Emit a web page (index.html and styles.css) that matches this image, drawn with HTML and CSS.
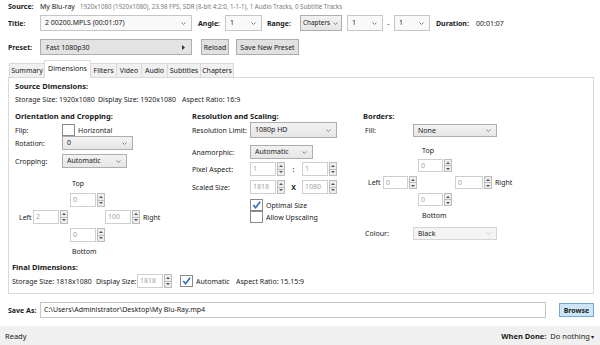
FILE: index.html
```html
<!DOCTYPE html>
<html lang="en">
<head>
    <meta charset="UTF-8">
    <title>HandBrake</title>
    <link rel="stylesheet" href="styles.css">
</head>
<body>

<div class="source-line">
    <b class="lbl">Source:</b><span class="src-name">My Blu-ray</span><span class="src-info">1920x1080 (1920x1080), 23.98 FPS, SDR (8-bit 4:2:0, 1-1-1), 1 Audio Tracks, 0 Subtitle Tracks</span>
</div>

<div class="bar title-bar">
    <b class="lbl">Title:</b>
    <div class="select light w-title">2 00200.MPLS (00:01:07)<svg class="caret" viewBox="0 0 5 3"><polyline points="0.5,0.5 2.5,2.5 4.5,0.5"/></svg></div>
    <b class="lbl-angle">Angle:</b>
    <div class="select light w-angle">1<svg class="caret" viewBox="0 0 5 3"><polyline points="0.5,0.5 2.5,2.5 4.5,0.5"/></svg></div>
    <b class="lbl-range">Range:</b>
    <div class="select w-chap"><span>Chapters</span><svg class="caret" viewBox="0 0 5 3"><polyline points="0.5,0.5 2.5,2.5 4.5,0.5"/></svg></div>
    <div class="select light w-num">1<svg class="caret" viewBox="0 0 5 3"><polyline points="0.5,0.5 2.5,2.5 4.5,0.5"/></svg></div>
    <span class="dash">-</span>
    <div class="select light w-num">1<svg class="caret" viewBox="0 0 5 3"><polyline points="0.5,0.5 2.5,2.5 4.5,0.5"/></svg></div>
    <b class="lbl-dur">Duration:</b>
    <span>00:01:07</span>
</div>

<div class="bar preset-bar">
    <b class="lbl">Preset:</b>
    <div class="preset">Fast 1080p30<svg class="arrow" viewBox="0 0 3 5"><polygon points="0,0 3,2.5 0,5"/></svg></div>
    <button class="btn reload">Reload</button>
    <button class="btn save-preset">Save New Preset</button>
</div>

<div class="tabs">
    <div class="tab w-summary">Summary</div>
    <div class="tab active w-dim">Dimensions</div>
    <div class="tab w-filters">Filters</div>
    <div class="tab w-video">Video</div>
    <div class="tab w-audio">Audio</div>
    <div class="tab w-subs">Subtitles</div>
    <div class="tab w-chapters">Chapters</div>
</div>

<div class="panel">
    <div class="heading">Source Dimensions:</div>
    <div class="info-row">
        <span class="i-storage">Storage Size: 1920x1080</span>
        <span class="i-display">Display Size: 1920x1080</span>
        <span>Aspect Ratio: 16:9</span>
    </div>

    <div class="columns">
        <!-- orientation and cropping -->
        <div class="col">
            <div class="heading">Orientation and Cropping:</div>
            <div class="field flip">
                <span class="flabel">Flip:</span>
                <span class="check"></span>
                <span class="check-text">Horizontal</span>
            </div>
            <div class="field">
                <span class="flabel">Rotation:</span>
                <div class="select sm w-rot">0<svg class="caret" viewBox="0 0 5 3"><polyline points="0.5,0.5 2.5,2.5 4.5,0.5"/></svg></div>
            </div>
            <div class="field crop-mode">
                <span class="flabel">Cropping:</span>
                <div class="select sm w-crop">Automatic<svg class="caret" viewBox="0 0 5 3"><polyline points="0.5,0.5 2.5,2.5 4.5,0.5"/></svg></div>
            </div>

            <div class="cross crop">
                <div class="cross-top-label">Top</div>
                <div class="cross-top"><span class="spin"><span class="spin-val">0</span><span class="spin-btns"><i class="up"></i><i class="dn"></i></span></span></div>
                <div class="cross-mid">
                    <span class="side-l">Left</span>
                    <span class="spin"><span class="spin-val">2</span><span class="spin-btns"><i class="up"></i><i class="dn"></i></span></span>
                    <span class="spin gap-r"><span class="spin-val">100</span><span class="spin-btns"><i class="up"></i><i class="dn"></i></span></span>
                    <span class="side-r">Right</span>
                </div>
                <div class="cross-bottom"><span class="spin"><span class="spin-val">0</span><span class="spin-btns"><i class="up"></i><i class="dn"></i></span></span></div>
                <div class="cross-bottom-label">Bottom</div>
            </div>
        </div>

        <!-- resolution and scaling -->
        <div class="col">
            <div class="heading">Resolution and Scaling:</div>
            <div class="field res-limit">
                <span class="flabel2">Resolution Limit:</span>
                <div class="select tall w-res">1080p HD<svg class="caret" viewBox="0 0 5 3"><polyline points="0.5,0.5 2.5,2.5 4.5,0.5"/></svg></div>
            </div>
            <div class="field anamorphic">
                <span class="flabel2">Anamorphic:</span>
                <div class="select sm w-ana">Automatic<svg class="caret" viewBox="0 0 5 3"><polyline points="0.5,0.5 2.5,2.5 4.5,0.5"/></svg></div>
            </div>
            <div class="field pair">
                <span class="flabel2">Pixel Aspect:</span>
                <span class="spin"><span class="spin-val">1</span><span class="spin-btns"><i class="up"></i><i class="dn"></i></span></span>
                <span class="sep">:</span>
                <span class="spin"><span class="spin-val">1</span><span class="spin-btns"><i class="up"></i><i class="dn"></i></span></span>
            </div>
            <div class="field pair">
                <span class="flabel2">Scaled Size:</span>
                <span class="spin"><span class="spin-val">1818</span><span class="spin-btns"><i class="up"></i><i class="dn"></i></span></span>
                <span class="sep x">X</span>
                <span class="spin"><span class="spin-val">1080</span><span class="spin-btns"><i class="up"></i><i class="dn"></i></span></span>
            </div>
            <div class="field opt optimal">
                <span class="check checked"><svg viewBox="0 0 12 11"><polyline points="2.5,5.5 5,8.5 10,2"/></svg></span>
                <span class="check-text">Optimal Size</span>
            </div>
            <div class="field opt">
                <span class="check"></span>
                <span class="check-text">Allow Upscaling</span>
            </div>
        </div>

        <!-- borders -->
        <div class="col">
            <div class="heading">Borders:</div>
            <div class="field fill">
                <span class="flabel3">Fill:</span>
                <div class="select sm w-fill">None<svg class="caret" viewBox="0 0 5 3"><polyline points="0.5,0.5 2.5,2.5 4.5,0.5"/></svg></div>
            </div>
            <div class="cross borders">
                <div class="cross-top-label">Top</div>
                <div class="cross-top"><span class="spin"><span class="spin-val">0</span><span class="spin-btns"><i class="up"></i><i class="dn"></i></span></span></div>
                <div class="cross-mid">
                    <span class="side-l">Left</span>
                    <span class="spin"><span class="spin-val">0</span><span class="spin-btns"><i class="up"></i><i class="dn"></i></span></span>
                    <span class="spin gap-r"><span class="spin-val">0</span><span class="spin-btns"><i class="up"></i><i class="dn"></i></span></span>
                    <span class="side-r">Right</span>
                </div>
                <div class="cross-bottom"><span class="spin"><span class="spin-val">0</span><span class="spin-btns"><i class="up"></i><i class="dn"></i></span></span></div>
                <div class="cross-bottom-label">Bottom</div>
            </div>
            <div class="field colour">
                <span class="flabel3">Colour:</span>
                <div class="select sm disabled w-fill">Black<svg class="caret" viewBox="0 0 5 3"><polyline points="0.5,0.5 2.5,2.5 4.5,0.5"/></svg></div>
            </div>
        </div>
    </div>

    <div class="final">
        <div class="heading">Final Dimensions:</div>
        <div class="final-row">
            <span class="f-storage">Storage Size: 1818x1080</span>
            <span class="f-display">Display Size:</span>
            <span class="spin"><span class="spin-val">1818</span><span class="spin-btns"><i class="up"></i><i class="dn"></i></span></span>
            <span class="check checked f-check"><svg viewBox="0 0 12 11"><polyline points="2.5,5.5 5,8.5 10,2"/></svg></span>
            <span class="check-text f-auto">Automatic</span>
            <span>Aspect Ratio: 15.15:9</span>
        </div>
    </div>
</div>

<div class="bar save-bar">
    <b class="lbl">Save As:</b>
    <div class="path">C:\Users\Administrator\Desktop\My Blu-Ray.mp4</div>
    <button class="btn browse">Browse</button>
</div>

<div class="status">
    <span class="ready">Ready</span>
    <span class="when-done"><b>When Done:</b> Do nothing<span class="dd">&#9662;</span></span>
</div>

</body>
</html>
```

FILE: styles.css
```css
body {
    margin: 0;
    width: 600px;
    height: 345px;
    overflow: hidden;
    background: #fff;
    font-family: "Noto Sans", "Open Sans", sans-serif;
    font-size: 7px;
    color: #1a1a1a;
}
b {
    font-weight: bold;
}

/* top rows */
.source-line {
    height: 14px;
    line-height: 14px;
    padding-left: 8px;
    display: flex;
    align-items: baseline;
    white-space: nowrap;
}
.src-name {
    margin-right: 5px;
}
.src-info {
    color: #7a7a7a;
    font-size: 6.2px;
}
.bar {
    display: flex;
    align-items: center;
    height: 16px;
    padding-left: 8px;
    white-space: nowrap;
}
.title-bar {
    margin-top: 1px;
}
.preset-bar {
    margin-top: 8px;
}
.lbl {
    width: 32px;
    flex-shrink: 0;
}
.lbl-angle {
    margin-left: 6px;
    width: 27px;
}
.lbl-range {
    margin-left: 5px;
    width: 33px;
}
.lbl-dur {
    margin-left: 6px;
    width: 40px;
}
.dash {
    width: 11px;
    text-align: center;
}

.select {
    box-sizing: border-box;
    height: 16px;
    line-height: 14px;
    padding-left: 4px;
    border: 1px solid #adadad;
    background: linear-gradient(#f2f2f2, #e6e6e6);
    display: flex;
    align-items: center;
    justify-content: space-between;
    padding-right: 5px;
    flex-shrink: 0;
}
.select.light {
    background: #f9f9f9;
    border-color: #c6c6c6;
}
.select.sm {
    height: 14px;
}
.select.disabled {
    background: #f4f4f4;
    border-color: #d5d5d5;
}
.select.disabled .caret {
    stroke: #c4c4c4;
}
.caret {
    width: 5px;
    height: 3px;
    fill: none;
    stroke: #777;
    stroke-width: 0.9;
    flex-shrink: 0;
}
.w-title { width: 152px; }
.w-angle { width: 37px; }
.w-chap {
    width: 42px;
    margin-right: 5px;
    padding: 0 3px 0 2px;
    font-size: 6.4px;
    overflow: hidden;
}
.w-num { width: 36px; }

.preset {
    box-sizing: border-box;
    width: 152px;
    height: 16px;
    border: 1px solid #adadad;
    background: #e3e3e3;
    display: flex;
    align-items: center;
    justify-content: space-between;
    padding: 0 6px 0 5px;
}
.arrow {
    width: 3px;
    height: 5px;
    fill: #333;
}
.btn {
    box-sizing: border-box;
    height: 16px;
    border: 1px solid #adadad;
    background: #e1e1e1;
    font: inherit;
    color: inherit;
    padding: 0;
}
.reload {
    margin-left: 9px;
    width: 28px;
}
.save-preset {
    margin-left: 7px;
    width: 63px;
}

/* tabs */
.tabs {
    display: flex;
    align-items: flex-end;
    height: 17px;
    margin-top: 5px;
    padding-left: 9px;
}
.tab {
    box-sizing: border-box;
    height: 14px;
    line-height: 13px;
    text-align: center;
    border: 1px solid #d9d9d9;
    border-bottom: none;
    background: #f0f0f0;
    margin-left: -1px;
}
.tab:first-child {
    margin-left: 0;
}
.tab.active {
    height: 18px;
    line-height: 16px;
    background: #fff;
    margin-bottom: -1px;
    position: relative;
    z-index: 1;
    padding-bottom: 1px;
}
.w-summary { width: 36px; }
.w-dim { width: 47px; }
.w-filters { width: 27px; }
.w-video { width: 26px; }
.w-audio { width: 27px; }
.w-subs { width: 34px; }
.w-chapters { width: 34px; }

/* panel */
.panel {
    box-sizing: border-box;
    margin-left: 8px;
    width: 586px;
    height: 217px;
    border: 1px solid #d9d9d9;
    padding: 2px 6px 0 6px;
}
.heading {
    font-weight: bold;
    font-size: 7.5px;
    height: 12px;
    line-height: 12px;
    white-space: nowrap;
}
.info-row {
    display: flex;
    height: 12px;
    line-height: 12px;
    margin-top: 2px;
    white-space: nowrap;
}
.i-storage { width: 83px; }
.i-display { width: 84px; }

.columns {
    display: grid;
    grid-template-columns: 177px 171px 1fr;
    margin-top: 4px;
}
.field {
    display: flex;
    align-items: center;
    white-space: nowrap;
}
.flabel { width: 47px; }
.flabel2 { width: 58px; }
.flabel3 { width: 48px; padding-left: 2px; }
.flip {
    height: 12px;
    margin-top: 2px;
}
.crop-mode {
    margin-top: 4px;
}
.w-rot { width: 71px; }
.w-crop { width: 65px; }
.w-res { width: 87px; }
.w-ana { width: 63px; }
.w-fill { width: 84px; }

.check {
    box-sizing: border-box;
    width: 13px;
    height: 12px;
    border: 1px solid #8a8a8a;
    background: #fff;
    display: flex;
    align-items: center;
    justify-content: center;
    flex-shrink: 0;
}
.check svg {
    width: 11px;
    height: 10px;
    fill: none;
    stroke: #2f6bc2;
    stroke-width: 1.8;
}
.check-text {
    margin-left: 3px;
}

/* spinner box */
.spin {
    display: flex;
    height: 14px;
    width: 35px;
    flex-shrink: 0;
}
.spin-val {
    box-sizing: border-box;
    flex: 1;
    border: 1px solid #cfcfcf;
    background: #fff;
    color: #a3a3a3;
    padding-left: 2px;
    line-height: 12px;
}
.spin-btns {
    box-sizing: border-box;
    width: 8px;
    margin-left: 1px;
    display: flex;
    flex-direction: column;
    border: 1px solid #bdbdbd;
    background: #ededed;
}
.spin-btns i {
    flex: 1;
    display: flex;
    align-items: center;
    justify-content: center;
}
.spin-btns i.up {
    border-bottom: 1px solid #bdbdbd;
}
.spin-btns i.up::after {
    content: "";
    border-left: 2px solid transparent;
    border-right: 2px solid transparent;
    border-bottom: 2px solid #555;
}
.spin-btns i.dn::after {
    content: "";
    border-left: 2px solid transparent;
    border-right: 2px solid transparent;
    border-top: 2px solid #555;
}

/* crop / border crosses */
.cross-top-label,
.cross-bottom-label {
    height: 12px;
    line-height: 12px;
}
.cross-mid {
    display: flex;
    align-items: center;
}
.side-l { width: 14px; }
.side-r { margin-left: 3px; }

.crop .cross-top-label { margin: 10px 0 0 57px; }
.crop .cross-top { margin: 3px 0 0 55px; }
.crop .cross-mid { margin: 3px 0 0 4px; }
.crop .gap-r { margin-left: 37px; }
.crop .cross-bottom { margin: 4px 0 0 55px; }
.crop .cross-bottom-label { margin: 4px 0 0 57px; }

.borders .spin { height: 13px; width: 34px; }
.borders .spin-val { line-height: 11px; }
.borders .cross-top-label { margin: 8px 0 0 59px; }
.borders .cross-top { margin: 2px 0 0 55px; }
.borders .cross-mid { margin: 4px 0 0 5px; }
.borders .side-l { width: 15px; }
.borders .gap-r { margin-left: 38px; width: 37px; }
.borders .cross-bottom { margin: 4px 0 0 55px; }
.borders .cross-bottom-label { margin: 4px 0 0 59px; }

.fill {
    margin-top: 2px;
}
.fill .select,
.colour .select {
    height: 13px;
}
.colour {
    margin-top: 5px;
}

.res-limit {
    height: 16px;
}
.select.tall {
    height: 16px;
}
.anamorphic {
    margin-top: 7px;
}
.pair {
    margin-top: 3px;
}
.pair + .pair {
    margin-top: 4px;
}
.sep {
    width: 17px;
    text-align: center;
}
.sep.x {
    font-weight: bold;
}
.optimal {
    margin-top: 5px;
}
.opt {
    padding-left: 58px;
    height: 12px;
}

/* final dimensions */
.final {
    margin: 3px 0 0 -3px;
}
.final-row {
    display: flex;
    align-items: center;
    height: 14px;
    margin-top: 1px;
    white-space: nowrap;
}
.f-storage { width: 84px; }
.f-display { width: 41px; }
.f-check { margin-left: 8px; }
.f-auto { width: 40px; }

/* save as */
.save-bar {
    margin-top: 8px;
}
.path {
    box-sizing: border-box;
    width: 506px;
    height: 16px;
    line-height: 14px;
    border: 1px solid #c6c6c6;
    padding-left: 3px;
    background: #fff;
}
.btn.browse {
    margin-left: 13px;
    width: 35px;
    height: 14px;
    background: #cde6f7;
    border-color: #6fa8dc;
    font-weight: bold;
}

/* status bar */
.status {
    margin-top: 8px;
    height: 19px;
    background: #f0f0f0;
    display: flex;
    align-items: center;
    justify-content: space-between;
    padding: 0 6px 0 5px;
    font-size: 7.5px;
}
.when-done b {
    margin-right: 2px;
}
.dd {
    font-size: 6px;
    margin-left: 1px;
}
```
